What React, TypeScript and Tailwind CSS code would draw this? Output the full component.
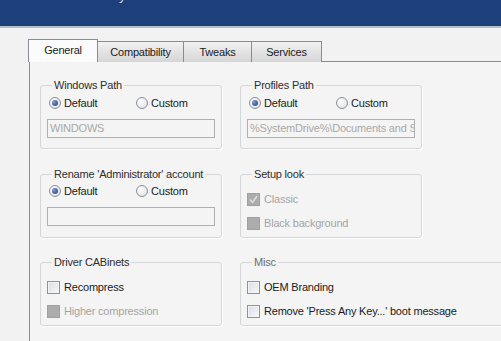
import React from 'react'

const font = "font-['Liberation_Sans',Arial,sans-serif]"

function Radio({ checked }: { checked?: boolean }) {
  return (
    <span className="ml-[2px] flex h-[12px] w-[12px] shrink-0 items-center justify-center rounded-full border border-[#8c8f94] bg-[radial-gradient(circle_at_35%_35%,#ffffff,#d9dde2)]">
      {checked && (
        <span className="h-[6px] w-[6px] rounded-full bg-[radial-gradient(circle_at_35%_35%,#7d9ad0,#1c3a78)]" />
      )}
    </span>
  )
}

function RadioRow({ selected }: { selected: 'default' | 'custom' }) {
  return (
    <div className="flex h-[14px] items-center text-[#1b1b1b]">
      <label className="flex w-[87px] items-center gap-[3px]">
        <Radio checked={selected === 'default'} />
        <span>Default</span>
      </label>
      <label className="flex items-center gap-[3px]">
        <Radio checked={selected === 'custom'} />
        <span>Custom</span>
      </label>
    </div>
  )
}

function Check({ label, disabled, checked }: { label: string; disabled?: boolean; checked?: boolean }) {
  return (
    <label className={`flex h-[14px] items-center gap-[4px] ${disabled ? 'text-[#a4a4a4]' : 'text-[#1b1b1b]'}`}>
      {disabled ? (
        <span className="flex h-[13px] w-[13px] shrink-0 items-center justify-center border border-[#a0a0a0] bg-[#acacac]">
          {checked && (
            <svg width="9" height="9" viewBox="0 0 9 9">
              <path d="M1 4.5 L3.5 7.5 L8 1" fill="none" stroke="#dcdcdc" strokeWidth="1.6" />
            </svg>
          )}
        </span>
      ) : (
        <span className="h-[13px] w-[13px] shrink-0 border border-[#8f9296] bg-[linear-gradient(135deg,#d7dee6,#f7f9fb)] shadow-[inset_0_0_0_1px_#f2f4f6]" />
      )}
      <span className="whitespace-nowrap">{label}</span>
    </label>
  )
}

function Group({ title, wide, dim, children }: { title: string; wide?: boolean; dim?: boolean; children: React.ReactNode }) {
  return (
    <fieldset
      className={`h-[71px] shrink-0 rounded-[3px] border border-[#d4d7da] px-[6px] shadow-[1px_1px_0_#ffffff] ${wide ? 'w-[300px]' : 'w-[182px]'}`}
    >
      <legend className={`ml-[5px] whitespace-nowrap px-[2px] leading-[14px] ${dim ? 'text-[#6e6e6e]' : 'text-[#2e2e2e]'}`}>
        {title}
      </legend>
      {children}
    </fieldset>
  )
}

function TextBox({ value }: { value?: string }) {
  return (
    <div className="mt-[9px] h-[19px] w-[168px] overflow-hidden whitespace-nowrap border border-[#adb0b3] bg-[#f4f4f4] px-[2px] leading-[17px] text-[#a9a9a9]">
      {value}
    </div>
  )
}

export default function App() {
  return (
    <div className={`h-[341px] w-[501px] overflow-hidden bg-[#f2f2f2] text-[11px] tracking-[-0.2px] ${font}`}>
      <div className="flex h-[26px] overflow-hidden bg-[#1d3f7b]">
        <span className="ml-[119px] -mt-[12px] text-[14px] leading-none text-[#c9d4e8]">y</span>
      </div>
      <div className="h-[2px] bg-[#b7bdc8]" />

      <div className="pl-[28px] pt-[11px]">
        <div className="flex h-[23px] items-end text-[#1b1b1b]">
          <div className="relative z-10 flex h-[23px] w-[70px] items-center justify-center border border-b-0 border-[#898c95] bg-[#fbfbfb] pb-[1px]">
            General
          </div>
          <div className="flex h-[21px] w-[86px] items-center justify-center border-t border-r border-[#898c95] bg-[linear-gradient(#f2f2f2,#e3e3e3_50%,#d6d6d6)]">
            Compatibility
          </div>
          <div className="flex h-[21px] w-[68px] items-center justify-center border-t border-r border-[#898c95] bg-[linear-gradient(#f2f2f2,#e3e3e3_50%,#d6d6d6)]">
            Tweaks
          </div>
          <div className="flex h-[21px] w-[70px] items-center justify-center border-t border-r border-[#898c95] bg-[linear-gradient(#f2f2f2,#e3e3e3_50%,#d6d6d6)]">
            Services
          </div>
        </div>

        <div className="-mt-px ml-[1px] h-[300px] w-[500px] border border-[#898c95] bg-[#f4f4f4] pl-[10px] pt-[16px]">
          <div className="flex gap-[18px]">
            <Group title="Windows Path">
              <div className="pt-[4px]">
                <RadioRow selected="default" />
                <TextBox value="WINDOWS" />
              </div>
            </Group>
            <Group title="Profiles Path">
              <div className="pt-[4px]">
                <RadioRow selected="default" />
                <TextBox value="%SystemDrive%\Documents and Settings" />
              </div>
            </Group>
          </div>

          <div className="mt-[18px] flex gap-[18px]">
            <Group title="Rename 'Administrator' account">
              <div className="pt-[3px]">
                <RadioRow selected="default" />
                <TextBox />
              </div>
            </Group>
            <Group title="Setup look">
              <div className="flex flex-col gap-[10px] pt-[11px]">
                <Check label="Classic" disabled checked />
                <Check label="Black background" disabled />
              </div>
            </Group>
          </div>

          <div className="mt-[17px] flex gap-[18px]">
            <Group title="Driver CABinets">
              <div className="flex flex-col gap-[10px] pt-[11px]">
                <Check label="Recompress" />
                <Check label="Higher compression" disabled />
              </div>
            </Group>
            <Group title="Misc" wide dim>
              <div className="flex flex-col gap-[10px] pt-[11px]">
                <Check label="OEM Branding" />
                <Check label="Remove 'Press Any Key...' boot message" />
              </div>
            </Group>
          </div>
        </div>
      </div>
    </div>
  )
}
